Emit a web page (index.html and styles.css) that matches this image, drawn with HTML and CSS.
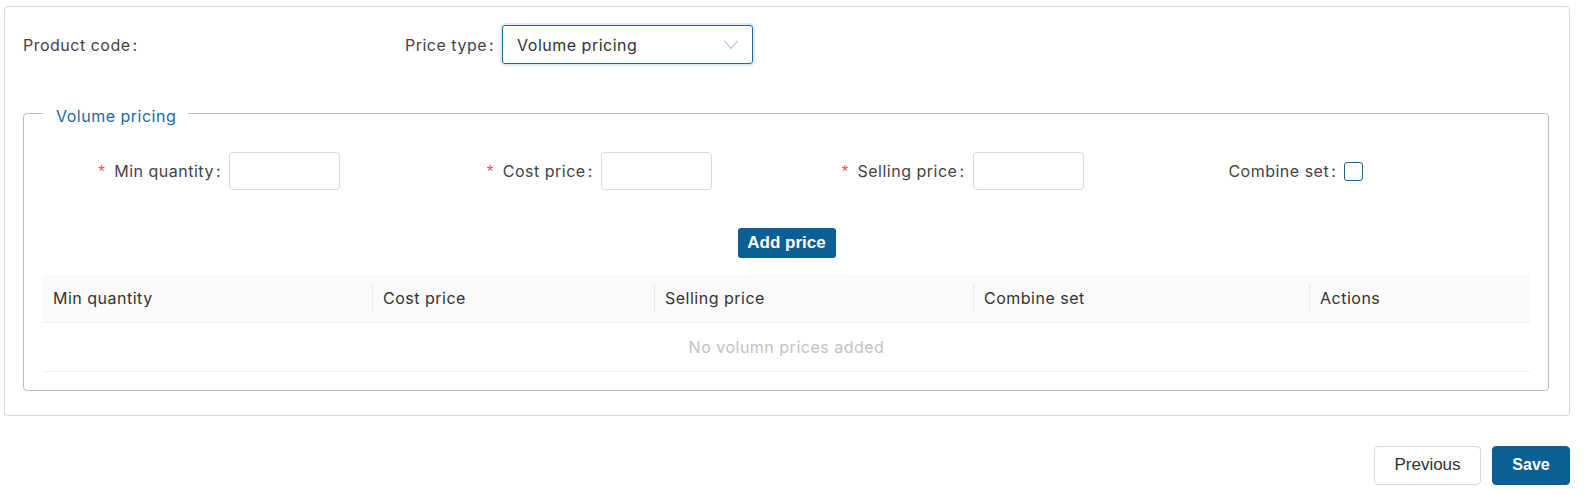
FILE: index.html
```html
<!DOCTYPE html>
<html lang="en">
<head>
<meta charset="utf-8">
<title>Volume pricing</title>
<link rel="stylesheet" href="styles.css">
</head>
<body>
<div class="page">
  <div class="panel">
    <div class="top-row">
      <div class="top-col first"><label class="lbl">Product code</label></div>
      <div class="top-col">
        <label class="lbl">Price type</label>
        <div class="select">
          <span>Volume pricing</span>
          <svg class="chev" width="14" height="10" viewBox="0 0 14 10"><path d="M0.5 0.8 L7 8.6 L13.5 0.8" fill="none" stroke="#bfbfbf" stroke-width="1.1"/></svg>
        </div>
      </div>
    </div>

    <fieldset class="group">
      <legend>Volume pricing</legend>
      <div class="form-row">
        <div class="field"><label class="lbl req">Min quantity</label><input class="input" type="text"></div>
        <div class="field"><label class="lbl req">Cost price</label><input class="input" type="text"></div>
        <div class="field"><label class="lbl req">Selling price</label><input class="input" type="text"></div>
        <div class="field"><label class="lbl">Combine set</label><span class="checkbox"></span></div>
      </div>
      <div class="btn-row"><button class="btn-add">Add price</button></div>
      <table class="grid">
        <colgroup>
          <col class="c1"><col class="c2"><col class="c3"><col class="c4"><col class="c5">
        </colgroup>
        <thead>
          <tr><th>Min quantity</th><th>Cost price</th><th>Selling price</th><th>Combine set</th><th>Actions</th></tr>
        </thead>
        <tbody>
          <tr><td class="empty" colspan="5">No volumn prices added</td></tr>
        </tbody>
      </table>
    </fieldset>
  </div>
  <div class="footer">
    <button class="btn">Previous</button>
    <button class="btn primary">Save</button>
  </div>
</div>
</body>
</html>
```
FILE: styles.css
```css
* { box-sizing: border-box; }
html, body { margin: 0; padding: 0; background: #fff; }
body {
  font-family: "Inter", "Noto Sans", sans-serif;
  font-size: 16px;
  letter-spacing: 0.5px;
  color: #444;
}
.page {
  padding: 6px 0 0 4px;
  width: 1570px;
}
.panel {
  width: 1566px;
  border: 1px solid #d6d6d6;
  border-radius: 4px;
  padding: 18px 20px 24px 18px;
}
.top-row {
  display: flex;
  align-items: center;
  height: 39px;
}
.top-col { display: flex; align-items: center; }
.top-col.first { width: 382px; }
.lbl { color: #444; white-space: nowrap; }
.lbl::after {
  content: ":";
  margin: 0 8px 0 2px;
}
.select {
  width: 251px;
  height: 39px;
  border: 1px solid #1d6aa1;
  border-radius: 3px;
  box-shadow: 0 0 0 2px rgba(29, 106, 161, 0.14);
  padding: 0 14px 0 14px;
  display: flex;
  align-items: center;
  justify-content: space-between;
  color: #333;
}
.chev { display: block; }

.group {
  margin: 35px 0 0;
  padding: 25px 18px 18px 19px;
  border: 1px solid #bdbdbd;
  border-radius: 4px;
  min-width: 0;
}
.group legend {
  padding: 6px 12px 0 13px;
  line-height: 22px;
  color: #1c67a3;
}
.form-row {
  display: grid;
  grid-template-columns: repeat(4, 1fr);
  height: 38px;
}
.field { display: flex; align-items: center; }
.field .lbl {
  width: 186px;
  flex-shrink: 0;
  text-align: right;
}
.req::before {
  content: "*";
  color: #ff4d4f;
  font-family: "Liberation Mono", monospace;
  font-size: 17px;
  margin-right: 7px;
}
.input {
  width: 111px;
  height: 38px;
  border: 1px solid #d9d9d9;
  border-radius: 4px;
  background: #fff;
  padding: 0 8px;
  font: inherit;
  outline: none;
}
.checkbox {
  display: block;
  width: 19px;
  height: 19px;
  border: 1.5px solid #1b5f93;
  border-radius: 3px;
  background: #fff;
}
.btn-row {
  margin-top: 38px;
  display: flex;
  justify-content: center;
}
.btn-add {
  width: 98px;
  height: 30px;
  border: none;
  border-radius: 3px;
  background: #0c5f95;
  color: #fff;
  font: bold 17px "Liberation Sans", Arial, sans-serif;
  letter-spacing: 0;
  padding: 0;
}
.grid {
  margin-top: 16px;
  width: 100%;
  border-collapse: collapse;
  table-layout: fixed;
}
.c1 { width: 329px; }
.c2 { width: 282px; }
.c3 { width: 319px; }
.c4 { width: 336px; }
.c5 { width: auto; }
.grid th {
  position: relative;
  height: 48px;
  background: #fafafa;
  border-bottom: 1px solid #efefef;
  text-align: left;
  font-weight: 400;
  color: #333;
  padding: 0 11px;
}
.grid th:first-child { padding-left: 10px; }
.grid th + th::before {
  content: "";
  position: absolute;
  left: 0;
  top: 10px;
  width: 1px;
  height: 28px;
  background: #e9e9e9;
}
.grid td.empty {
  height: 49px;
  text-align: center;
  color: #c2c2c2;
  border-bottom: 1px solid #efefef;
}
.footer {
  margin-top: 30px;
  display: flex;
  justify-content: flex-end;
  gap: 11px;
  width: 1566px;
}
.btn {
  height: 39px;
  width: 107px;
  border: 1px solid #d9d9d9;
  border-radius: 4px;
  background: #fff;
  color: #333;
  font: 17px "Liberation Sans", Arial, sans-serif;
  letter-spacing: 0;
  padding: 0;
}
.btn.primary {
  width: 78px;
  border-color: #0c5f95;
  background: #0c5f95;
  color: #fff;
  font-weight: bold;
  font-size: 16px;
}
```
